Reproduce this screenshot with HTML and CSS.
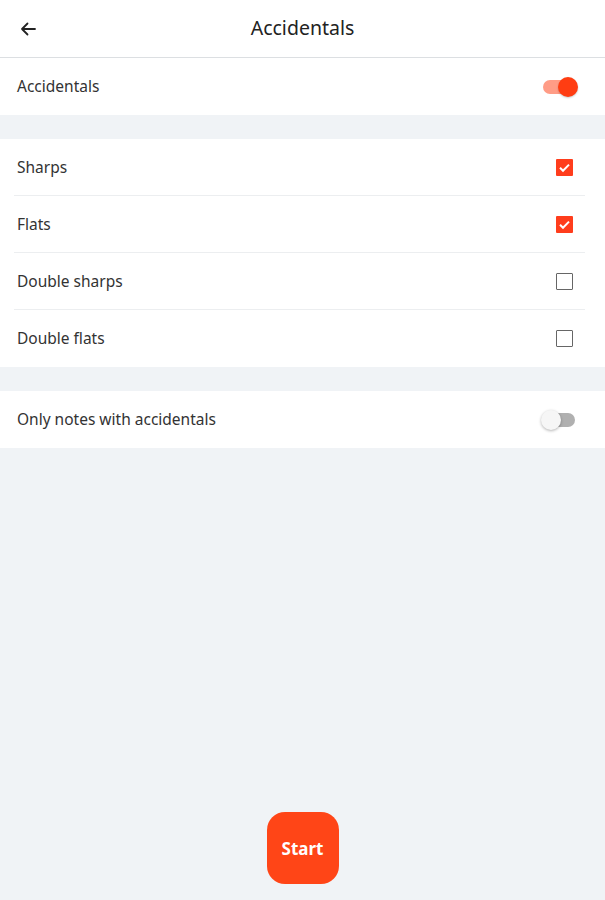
FILE: index.html
```html
<!DOCTYPE html>
<html>
<head>
<meta charset="utf-8">
<link rel="stylesheet" href="styles.css">
</head>
<body>
<div class="app">
  <header class="topbar">
    <span class="back">
      <svg width="18" height="18" viewBox="0 0 18 18"><path d="M16 9H3M8.5 3.5L3 9l5.5 5.5" fill="none" stroke="#222" stroke-width="1.8" stroke-linecap="round" stroke-linejoin="round"/></svg>
    </span>
    <h1 class="title">Accidentals</h1>
  </header>

  <section class="group">
    <div class="row">
      <span class="label">Accidentals</span>
      <span class="switch on"><span class="track"></span><span class="thumb"></span></span>
    </div>
  </section>

  <section class="group">
    <div class="row divided">
      <span class="label">Sharps</span>
      <span class="check checked"><svg width="17" height="17" viewBox="0 0 17 17"><path d="M4 8.8l3 3 6-6.2" fill="none" stroke="#fff" stroke-width="2"/></svg></span>
    </div>
    <div class="row divided">
      <span class="label">Flats</span>
      <span class="check checked"><svg width="17" height="17" viewBox="0 0 17 17"><path d="M4 8.8l3 3 6-6.2" fill="none" stroke="#fff" stroke-width="2"/></svg></span>
    </div>
    <div class="row divided">
      <span class="label">Double sharps</span>
      <span class="check"></span>
    </div>
    <div class="row">
      <span class="label">Double flats</span>
      <span class="check"></span>
    </div>
  </section>

  <section class="group">
    <div class="row">
      <span class="label">Only notes with accidentals</span>
      <span class="switch off"><span class="track"></span><span class="thumb"></span></span>
    </div>
  </section>

  <div class="spacer"></div>
  <div class="footer">
    <button class="start">Start</button>
  </div>
</div>
</body>
</html>
```

FILE: styles.css
```css
* { box-sizing: border-box; }
html, body { margin: 0; padding: 0; }
body {
  background: #f0f3f6;
  font-family: "Noto Sans", "Open Sans", sans-serif;
  color: #2b2b2b;
  width: 605px;
  height: 900px;
  overflow: hidden;
}
.app {
  display: flex;
  flex-direction: column;
  height: 900px;
}
.topbar {
  height: 58px;
  background: #fff;
  border-bottom: 1px solid #dcdfe2;
  display: flex;
  align-items: center;
  justify-content: center;
  position: relative;
  flex: none;
}
.back {
  position: absolute;
  left: 19px;
  top: 20px;
  width: 18px;
  height: 18px;
  display: flex;
}
.title {
  margin: 0 0 2px;
  font-size: 19.5px;
  font-weight: 400;
  color: #222;
}
.group {
  background: #fff;
  margin-bottom: 24px;
  flex: none;
}
.row {
  height: 57px;
  padding: 0 28px 0 17px;
  display: flex;
  align-items: center;
  justify-content: space-between;
  position: relative;
}
.row.divided::after {
  content: "";
  position: absolute;
  left: 14px;
  right: 20px;
  bottom: 0;
  height: 1px;
  background: #eceef0;
}
.label {
  font-size: 15.5px;
  color: #333;
  margin-bottom: 2px;
}
.check {
  width: 17px;
  height: 17px;
  border: 1.5px solid #666;
  border-radius: 1px;
  display: flex;
  align-items: center;
  justify-content: center;
  margin-right: 4px;
}
.check.checked {
  background: #ff3d1c;
  border: none;
}
.switch {
  position: relative;
  width: 36px;
  height: 20px;
  display: block;
}
.switch .track {
  position: absolute;
  left: 2px;
  top: 3px;
  width: 32px;
  height: 14px;
  border-radius: 7px;
}
.switch .thumb {
  position: absolute;
  top: 0;
  width: 20px;
  height: 20px;
  border-radius: 50%;
}
.switch.on .track { background: #ff9c86; }
.switch.on .thumb { left: 17px; background: #ff3d12; box-shadow: 0 1px 2px rgba(0,0,0,0.2); }
.switch.off .track { background: #b0b0b0; }
.switch.off .thumb { left: 0; background: #f6f6f6; box-shadow: 0 1px 3px rgba(0,0,0,0.3); }
.spacer { flex: 1; }
.footer {
  display: flex;
  justify-content: center;
  padding-bottom: 16px;
  flex: none;
}
.start {
  width: 72px;
  height: 72px;
  border: none;
  border-radius: 18px;
  background: #ff4517;
  color: #fff;
  font-family: "Noto Sans", sans-serif;
  font-weight: 700;
  font-size: 17px;
  padding: 0;
}
```
